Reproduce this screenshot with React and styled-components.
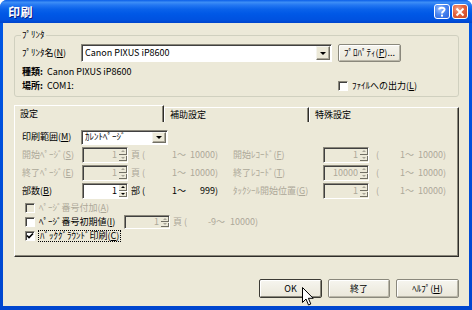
import React from 'react';
import styled, { createGlobalStyle, css } from 'styled-components';

const Global = createGlobalStyle`
  html, body { margin: 0; padding: 0; background: #fff; }
  body { font-family: "Noto Sans CJK JP", "Liberation Sans", sans-serif; }
`;

const FACE = '#ECE9D8';
const GRAY = '#ACA899';

const Window = styled.div`
  position: relative;
  width: 472px;
  height: 310px;
  box-sizing: border-box;
  display: flex;
  flex-direction: column;
  background: linear-gradient(to bottom, #0058E6, #0046CF);
  border-radius: 7px 7px 0 0;
  overflow: hidden;
  font-family: "Noto Sans CJK JP", sans-serif;
  font-size: 9px;
  line-height: 12px;
  color: #000;
`;

const TitleBar = styled.div`
  flex: none;
  height: 23px;
  display: flex;
  align-items: center;
  padding: 0 4px 0 8px;
  background: linear-gradient(to bottom, #0A5EE8 0%, #3D8EF6 10%, #2377F2 22%, #0A62EA 40%, #0058E6 60%, #0052E0 85%, #0044CC 100%);
`;

const Title = styled.div`
  flex: 1;
  color: #fff;
  font-weight: bold;
  font-size: 12px;
  letter-spacing: 0.5px;
  text-shadow: 1px 1px #0A1F8A;
`;

const CaptionButton = styled.div`
  width: 16px;
  height: 15px;
  margin-left: 2px;
  box-sizing: border-box;
  border: 1px solid #fff;
  border-radius: 3px;
  display: flex;
  align-items: center;
  justify-content: center;
  background: ${p => (p.$close
    ? 'radial-gradient(circle at 35% 30%, #F4A48A 0%, #E5633E 45%, #C94520 100%)'
    : 'radial-gradient(circle at 35% 30%, #9CC0FF 0%, #4A86F0 45%, #2860DC 100%)')};
`;

const Client = styled.div`
  flex: 1;
  margin: 0 3px 4px;
  background: ${FACE};
  display: flex;
  flex-direction: column;
  padding: 6px 10px 0 11px;
`;

const Group = styled.fieldset`
  margin: 0;
  padding: 3px 7px 4px 7px;
  border: 1px solid #D0D0BF;
  border-radius: 3px;
  min-width: 0;
  display: grid;
  grid-template-columns: 53px 251px max-content;
  column-gap: 6px;
  align-items: center;
`;

const Legend = styled.legend`
  margin-left: -1px;
  padding: 0 1px;
  line-height: 12px;
  font-size: 9px;
`;

const Label = styled.span`
  white-space: nowrap;
  color: ${p => (p.$disabled ? GRAY : '#000')};
`;

const Key = styled.u`
  text-decoration: underline;
`;

const raised = css`
  border-style: solid;
  border-width: 1px;
  border-color: #F5F4EE #716F64 #716F64 #F5F4EE;
  box-shadow: inset -1px -1px #ACA899;
`;

const sunken = css`
  border-style: solid;
  border-width: 1px;
  border-color: #8A877A #FFFFFF #FFFFFF #8A877A;
  box-shadow: inset 1px 1px #404040;
`;

const Combo = styled.div`
  ${sunken};
  box-sizing: border-box;
  width: ${p => p.$w}px;
  height: ${p => p.$h}px;
  background: #fff;
  display: flex;
  align-items: center;
  padding: 1px 1px 1px 3px;
`;

const ComboText = styled.span`
  flex: 1;
  white-space: nowrap;
  overflow: hidden;
`;

const ArrowButton = styled.div`
  ${raised};
  box-sizing: border-box;
  width: 14px;
  align-self: stretch;
  background: ${FACE};
  display: flex;
  align-items: center;
  justify-content: center;
`;

const Triangle = styled.div`
  width: 0;
  height: 0;
  border-left: ${p => p.$s}px solid transparent;
  border-right: ${p => p.$s}px solid transparent;
  ${p => (p.$up ? 'border-bottom' : 'border-top')}: ${p => p.$s}px solid ${p => p.$c || '#000'};
`;

const PushButton = styled.div`
  box-sizing: border-box;
  width: ${p => p.$w || 63}px;
  height: ${p => p.$h || 18}px;
  border: 1px solid ${p => (p.$default ? '#3B3A34' : '#8A887C')};
  border-radius: 2px;
  background: linear-gradient(to bottom, #F6F5EF, #EAE7D9);
  box-shadow: inset 1px 1px #fff, inset -1px -1px ${p => (p.$default ? '#8A887C' : '#B9B6A8')};
  display: flex;
  align-items: center;
  justify-content: center;
  white-space: nowrap;
`;

const InfoRow = styled.div`
  grid-column: ${p => p.$span};
  height: 12px;
  margin-top: ${p => p.$mt}px;
  display: flex;
  gap: 4px;
  white-space: nowrap;
`;

const Strong = styled.span`
  font-weight: bold;
`;

const CheckItem = styled.div`
  display: flex;
  align-items: center;
  gap: 4px;
  flex: none;
  margin-top: ${p => p.$mt || 0}px;
  margin-left: ${p => p.$ml || 0}px;
  width: ${p => (p.$w ? `${p.$w}px` : 'auto')};
  height: ${p => p.$h || 12}px;
  white-space: nowrap;
  color: ${p => (p.$disabled ? GRAY : '#000')};
`;

const Box = styled.div`
  box-sizing: border-box;
  flex: none;
  width: 10px;
  height: 10px;
  border-style: solid;
  border-width: 1px;
  border-color: #8A877A #fff #fff #8A877A;
  box-shadow: inset 1px 1px #404040;
  background: ${p => (p.$disabled ? FACE : '#fff')};
  display: flex;
  align-items: center;
  justify-content: center;
`;

const Focus = styled.span`
  outline: 1px dotted #000;
  outline-offset: 0;
  padding: 0 1px;
  line-height: 10px;
`;

const TabStrip = styled.div`
  margin-top: 8px;
  height: 17px;
  display: grid;
  grid-template-columns: 150px 145px 1fr;
  align-items: end;
`;

const Tab = styled.div`
  box-sizing: border-box;
  height: ${p => (p.$active ? 17 : 15)}px;
  border-top: 1px solid #fff;
  border-left: 1px solid #fff;
  border-right: 1px solid #2E2D29;
  box-shadow: inset -1px 0 #8A877A;
  padding-left: 5px;
  display: flex;
  align-items: center;
  padding-bottom: ${p => (p.$active ? 1 : 0)}px;
`;

const Panel = styled.div`
  box-sizing: border-box;
  height: 135px;
  border-style: solid;
  border-width: 0 1px 1px 1px;
  border-color: #fff #2E2D29 #2E2D29 #fff;
  box-shadow: inset -1px -1px #8A877A;
  padding: 6px 0 0 7px;
  display: flex;
  flex-direction: column;
`;

const FormRow = styled.div`
  display: flex;
  align-items: center;
  height: ${p => p.$h || 18}px;
`;

const Half = styled.div`
  display: flex;
  align-items: center;
  width: ${p => p.$w}px;
`;

const FieldLabel = styled.span`
  width: ${p => p.$w}px;
  flex: none;
  white-space: nowrap;
  color: ${p => (p.$disabled ? GRAY : '#000')};
`;

const SpinWrap = styled.div`
  ${sunken};
  box-sizing: border-box;
  width: 46px;
  height: ${p => p.$h || 16}px;
  flex: none;
  display: flex;
  background: ${p => (p.$disabled ? FACE : '#fff')};
  color: ${p => (p.$disabled ? GRAY : '#000')};
`;

const SpinValue = styled.span`
  flex: 1;
  text-align: right;
  padding-right: 2px;
  align-self: center;
`;

const SpinButtons = styled.div`
  width: 8px;
  display: flex;
  flex-direction: column;
  gap: 1px;
  padding: 1px 0;
`;

const SpinHalf = styled.div`
  flex: 1;
  ${raised};
  border-width: 0 1px 1px 0;
  box-shadow: none;
  background: ${FACE};
  display: flex;
  align-items: center;
  justify-content: center;
`;

const Unit = styled.span`
  width: ${p => p.$w}px;
  padding-left: ${p => p.$pl}px;
  box-sizing: border-box;
  flex: none;
  white-space: nowrap;
  color: ${p => (p.$disabled ? GRAY : '#000')};
`;

const Range = styled.span`
  width: ${p => p.$w || 46}px;
  flex: none;
  display: flex;
  justify-content: space-between;
  gap: 3px;
  white-space: pre;
  color: ${p => (p.$disabled ? GRAY : '#000')};
`;

const ButtonRow = styled.div`
  margin-top: 22px;
  display: flex;
  justify-content: flex-end;
  gap: 6px;
`;

const Cursor = styled.svg`
  position: absolute;
  left: 302px;
  top: 287px;
`;

function Spin({ value, disabled, h }) {
  const c = disabled ? '#A8A597' : '#000';
  return (
    <SpinWrap $disabled={disabled} $h={h}>
      <SpinValue>{value}</SpinValue>
      <SpinButtons>
        <SpinHalf><Triangle $up $s={2} $c={c} /></SpinHalf>
        <SpinHalf><Triangle $s={2} $c={c} /></SpinHalf>
      </SpinButtons>
    </SpinWrap>
  );
}

function Check({ checked, disabled }) {
  return (
    <Box $disabled={disabled}>
      {checked && (
        <svg width="8" height="8" viewBox="0 0 8 8">
          <path d="M1 3.5 L3 5.5 L7 1.5" stroke="#000" strokeWidth="1.6" fill="none" />
        </svg>
      )}
    </Box>
  );
}

const rows = [
  { l: <>開始ﾍﾟｰｼﾞ(<Key>S</Key>)</>, v: '1', unit: '頁 (', r: <>開始ﾚｺｰﾄﾞ(<Key>F</Key>)</>, rv: '1', dis: true },
  { l: <>終了ﾍﾟｰｼﾞ(<Key>E</Key>)</>, v: '1', unit: '頁 (', r: <>終了ﾚｺｰﾄﾞ(<Key>T</Key>)</>, rv: '10000', dis: true },
  { l: <>部数(<Key>B</Key>)</>, v: '1', unit: '部 (', r: <>ﾀｯｸｼｰﾙ開始位置(<Key>G</Key>)</>, rv: '1', dis: false, max: '999)' },
];

export default function App() {
  return (
    <>
      <Global />
      <Window>
        <TitleBar>
          <Title>印刷</Title>
          <CaptionButton>
            <svg width="10" height="11" viewBox="0 0 10 11">
              <path d="M2.2 3.6 C2.2 1.2 7.6 1 7.6 3.6 C7.6 5.4 5 5.4 5 7.4" stroke="#fff" strokeWidth="1.9" fill="none" />
              <rect x="4" y="8.6" width="2" height="2" fill="#fff" />
            </svg>
          </CaptionButton>
          <CaptionButton $close>
            <svg width="10" height="10" viewBox="0 0 10 10">
              <path d="M1.5 1.5 L8.5 8.5 M8.5 1.5 L1.5 8.5" stroke="#fff" strokeWidth="1.9" />
            </svg>
          </CaptionButton>
        </TitleBar>
        <Client>
          <Group>
            <Legend>ﾌﾟﾘﾝﾀ</Legend>
            <Label>ﾌﾟﾘﾝﾀ名(<Key>N</Key>)</Label>
            <Combo $w={251} $h={18}>
              <ComboText>Canon PIXUS iP8600</ComboText>
              <ArrowButton><Triangle $s={3} /></ArrowButton>
            </Combo>
            <PushButton $w={63} $h={18}><span>ﾌﾟﾛﾊﾟﾃｨ(<Key>P</Key>)...</span></PushButton>
            <InfoRow $span="1 / 4" $mt={4}><Strong>種類:</Strong><span>Canon PIXUS iP8600</span></InfoRow>
            <InfoRow $span="1 / 3" $mt={2}><Strong>場所:</Strong><span>COM1:</span></InfoRow>
            <CheckItem $mt={2}><Check /><span>ﾌｧｲﾙへの出力(<Key>L</Key>)</span></CheckItem>
          </Group>

          <TabStrip>
            <Tab $active>設定</Tab>
            <Tab>補助設定</Tab>
            <Tab>特殊設定</Tab>
          </TabStrip>
          <Panel>
            <FormRow>
              <FieldLabel $w={59}>印刷範囲(<Key>M</Key>)</FieldLabel>
              <Combo $w={87} $h={15}>
                <ComboText>ｶﾚﾝﾄﾍﾟｰｼﾞ</ComboText>
                <ArrowButton><Triangle $s={3} /></ArrowButton>
              </Combo>
            </FormRow>
            {rows.map((r, i) => (
              <FormRow key={i}>
                <Half $w={211}>
                  <FieldLabel $w={60} $disabled={r.dis}>{r.l}</FieldLabel>
                  <Spin value={r.v} disabled={r.dis} />
                  <Unit $w={44} $pl={3} $disabled={r.dis}>{r.unit}</Unit>
                  <Range $disabled={r.dis}><span>1～</span><span>{r.max || '10000)'}</span></Range>
                </Half>
                <FieldLabel $w={90} $disabled>{r.r}</FieldLabel>
                <Spin value={r.rv} disabled />
                <Unit $w={31} $pl={7} $disabled>(</Unit>
                <Range $disabled><span>1～</span><span>10000)</span></Range>
              </FormRow>
            ))}
            <CheckItem $ml={3} $mt={1} $h={14} $disabled>
              <Check disabled /><span>ﾍﾟｰｼﾞ番号付加(<Key>A</Key>)</span>
            </CheckItem>
            <FormRow $h={14}>
              <CheckItem $ml={3} $h={14} $w={99}>
                <Check /><span>ﾍﾟｰｼﾞ番号初期値(<Key>I</Key>)</span>
              </CheckItem>
              <Spin value="1" disabled h={14} />
              <Unit $w={38} $pl={3} $disabled>頁 (</Unit>
              <Range $w={50} $disabled><span>-9～</span><span>10000)</span></Range>
            </FormRow>
            <CheckItem $ml={3} $h={14}>
              <Check checked /><Focus>ﾊﾞｯｸｸﾞﾗｳﾝﾄﾞ印刷(<Key>C</Key>)</Focus>
            </CheckItem>
          </Panel>

          <ButtonRow>
            <PushButton $default $h={19}>OK</PushButton>
            <PushButton $w={62} $h={19}>終了</PushButton>
            <PushButton $h={19}><span>ﾍﾙﾌﾟ(<Key>H</Key>)</span></PushButton>
          </ButtonRow>
        </Client>
        <Cursor width="13" height="20" viewBox="0 0 13 20">
          <path d="M0.5 0.5 L0.5 15.5 L4 12 L6.5 18 L8.8 17 L6.4 11.3 L11.2 11.3 Z" fill="#fff" stroke="#000" strokeWidth="1" strokeLinejoin="miter" />
        </Cursor>
      </Window>
    </>
  );
}
